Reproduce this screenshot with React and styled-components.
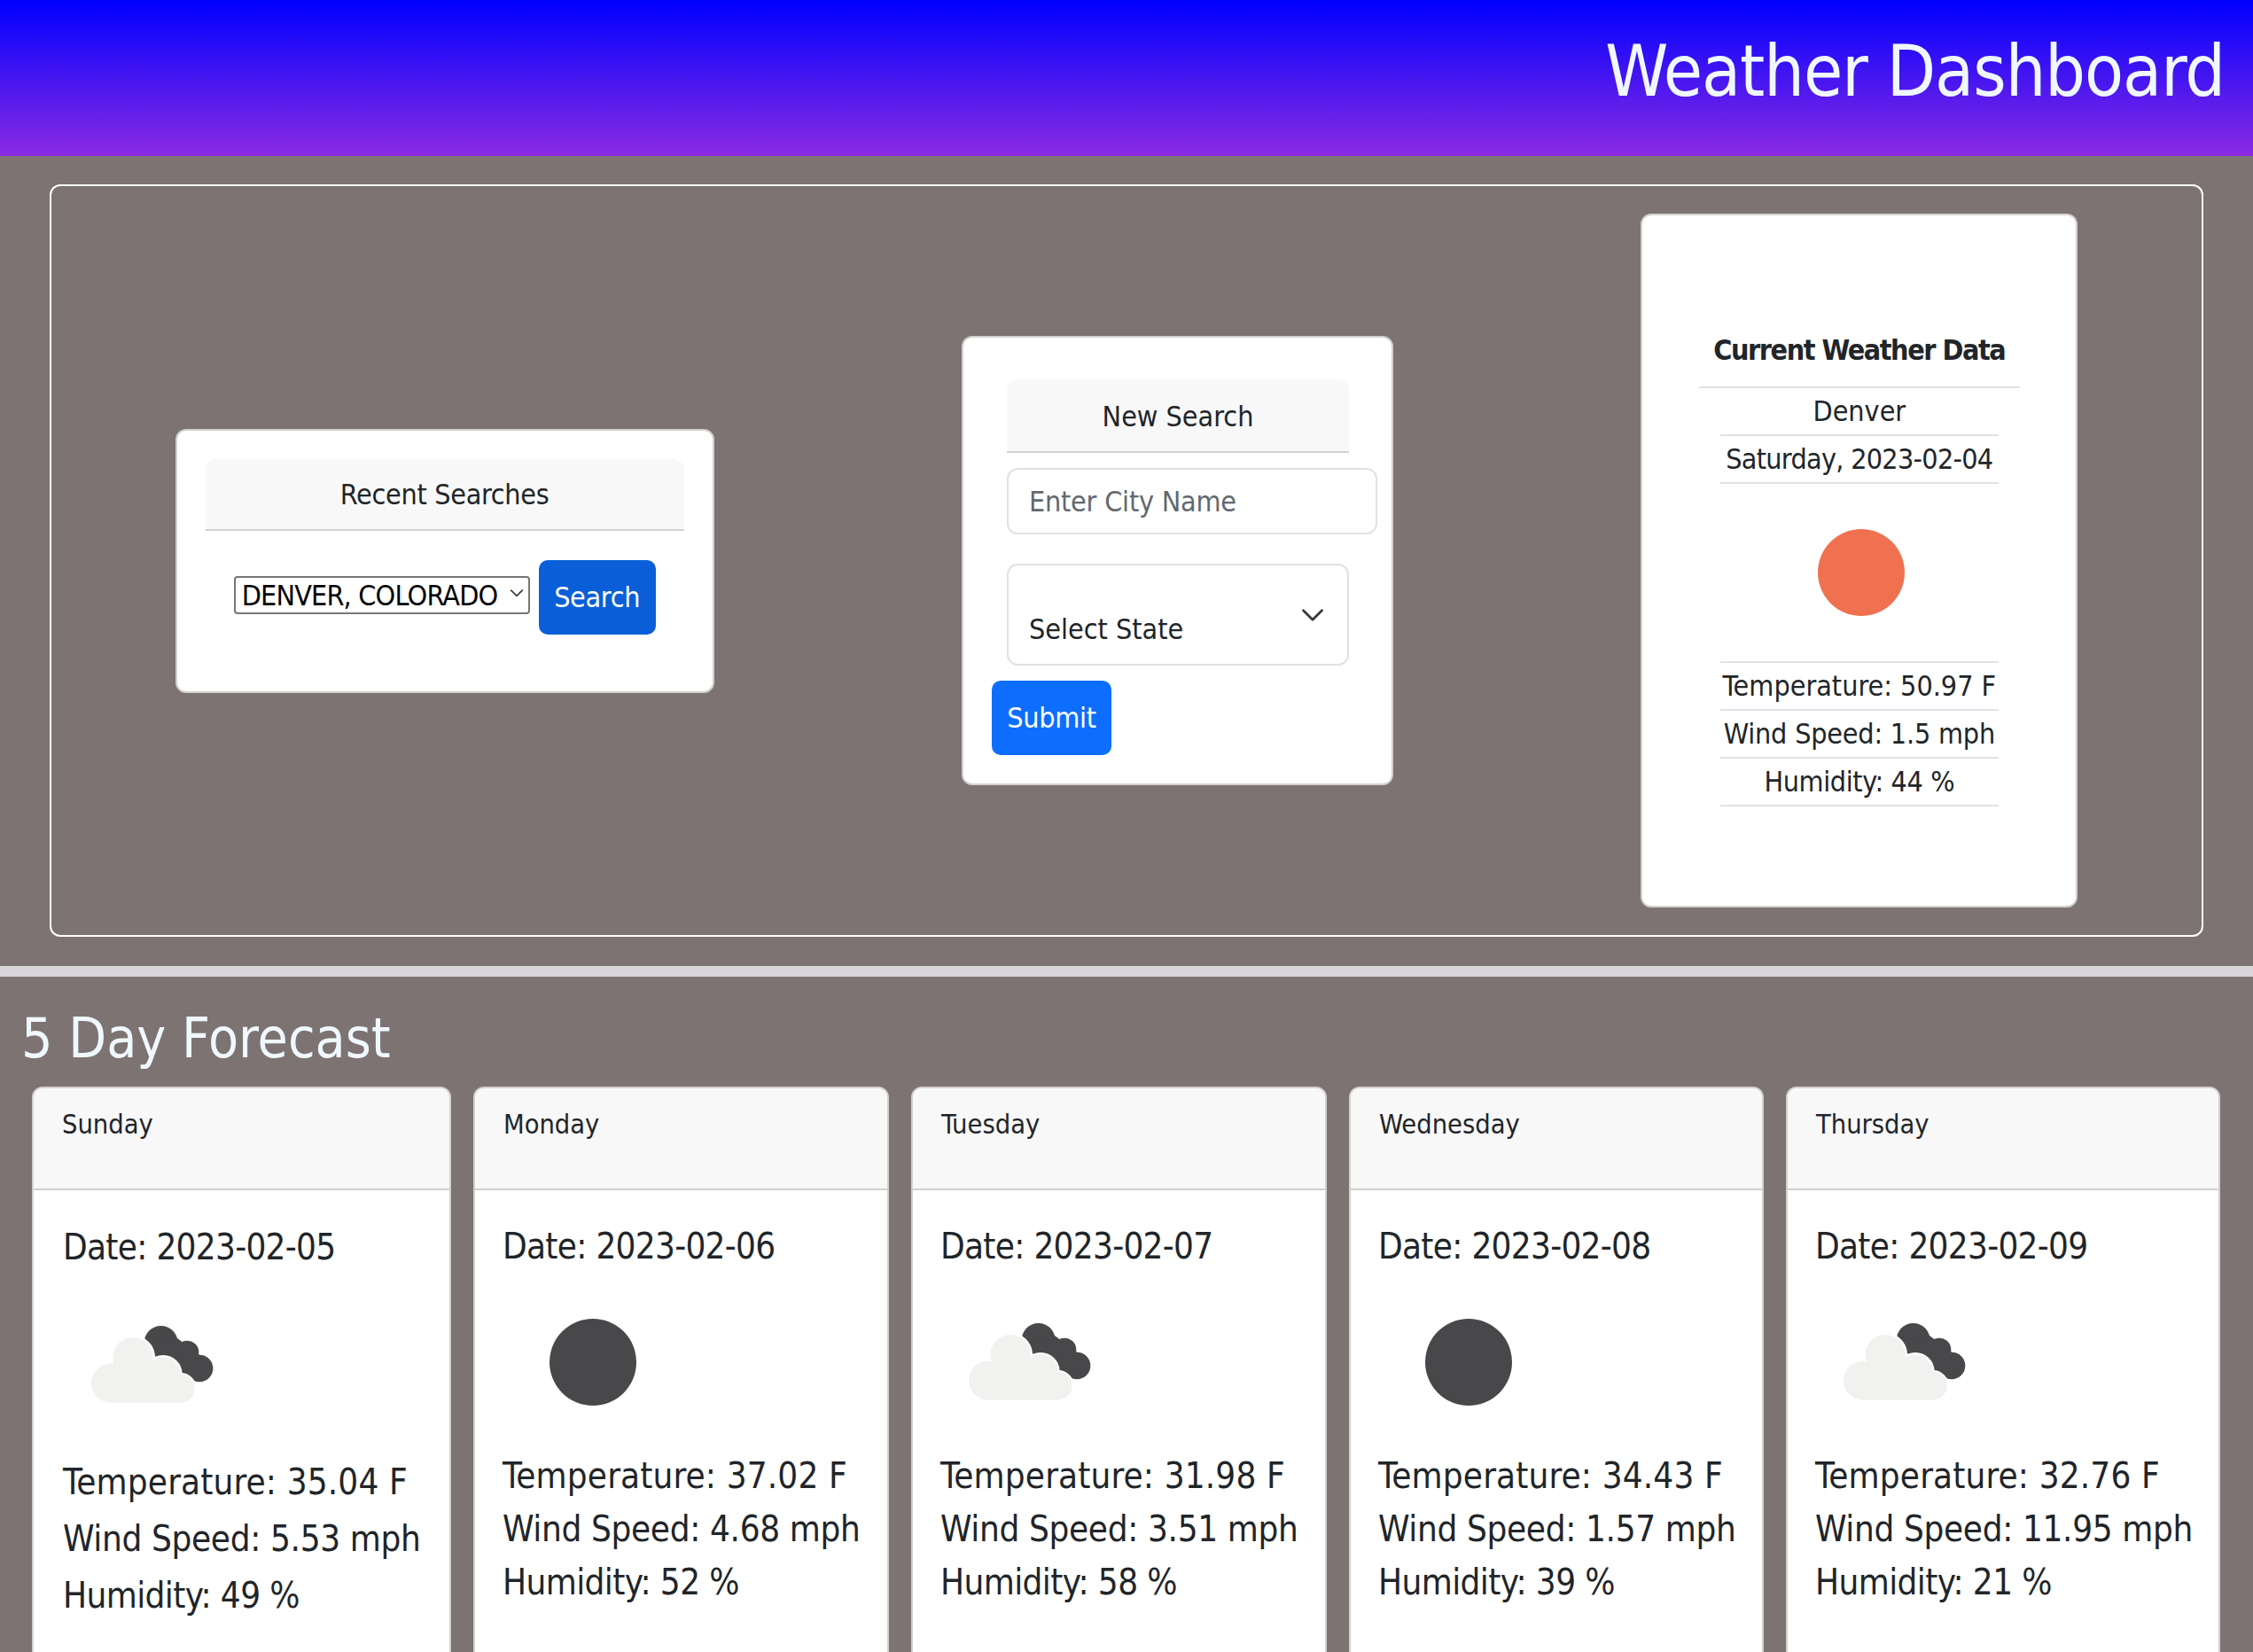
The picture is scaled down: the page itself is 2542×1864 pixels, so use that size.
import React from "react";
import styled, { createGlobalStyle } from "styled-components";

const Global = createGlobalStyle`
  html, body { margin: 0; padding: 0; height: 100%; overflow: hidden; }
  body {
    background: #7d7372;
    color: #212529;
    font-family: "DejaVu Sans", "Liberation Sans", sans-serif;
    font-stretch: condensed;
    font-size: 32px;
    line-height: 48px;
  }
  * { box-sizing: border-box; }
`;

const Header = styled.header`
  height: 176px;
  background: linear-gradient(#0000ff, #8a2be2);
  color: aliceblue;
  display: flex;
  justify-content: flex-end;
  align-items: center;
  padding: 0 32px 0 0;
`;
const Title = styled.h1`
  margin: 0;
  font-size: 80px;
  font-weight: 400;
  line-height: 96px;
  letter-spacing: -1px;
  position: relative;
  top: -7px;
`;
const Panel = styled.section`
  margin: 32px 56px 33px;
  height: 849px;
  border: 2px solid #fff;
  border-radius: 12px;
  display: flex;
  justify-content: space-around;
  align-items: center;
`;
const Card = styled.div`
  background: #fff;
  border: 2px solid #d3d0d0;
  border-radius: 12px;
`;
const RecentCard = styled(Card)`
  width: 608px;
  height: 298px;
  padding: 32px;
`;
const NewCard = styled(Card)`
  width: 487px;
  height: 507px;
  padding: 47px 48px 0 32px;
`;
const CurrentCard = styled(Card)`
  width: 493px;
  height: 783px;
  padding: 110px 63px 0;
  display: flex;
  flex-direction: column;
  align-items: center;
`;
const PanelHead = styled.div`
  background: #f8f8f8;
  border-bottom: 2px solid #d3d3d3;
  border-radius: 12px 12px 0 0;
  height: ${(p) => p.$h}px;
  line-height: ${(p) => p.$lh}px;
  letter-spacing: ${(p) => p.$ls || 0}px;
  text-align: center;
`;
const RecentForm = styled.form`
  display: flex;
  align-items: flex-start;
  gap: 10px;
  margin: 33px 0 0 32px;
`;
const NativeWrap = styled.div`
  position: relative;
  width: 334px;
  height: 43px;
  margin-top: 16px;
`;
const NativeSelect = styled.select`
  appearance: none;
  width: 100%;
  height: 100%;
  font: inherit;
  font-stretch: condensed;
  font-size: 32px;
  line-height: 36px;
  letter-spacing: -0.8px;
  color: #000;
  background: #fff;
  border: 2px solid #767676;
  border-radius: 4px;
  padding: 0 2px 0 7px;
`;
const NativeChevron = styled.svg`
  position: absolute;
  right: 6px;
  top: 12px;
  width: 18px;
  height: 18px;
  pointer-events: none;
`;
const Button = styled.button`
  height: 84px;
  padding: 0;
  width: ${(p) => p.$w}px;
  background: ${(p) => p.$bg};
  color: #fff;
  border: 0;
  border-radius: 10px;
  font: inherit;
  font-stretch: condensed;
  letter-spacing: -0.3px;
  line-height: 80px;
`;
const NewBody = styled.div`
  margin-left: 17px;
`;
const CityInput = styled.input`
  display: block;
  width: 418px;
  height: 75px;
  margin-top: 17px;
  padding: 0 23px;
  border: 2px solid #dee2e6;
  border-radius: 12px;
  font: inherit;
  font-stretch: condensed;
  letter-spacing: -0.2px;
  color: #212529;
  &::placeholder { color: #62686e; opacity: 1; }
`;
const StateWrap = styled.div`
  position: relative;
  width: 386px;
  height: 115px;
  margin: 33px 0 17px;
`;
const StateSelect = styled.select`
  appearance: none;
  width: 100%;
  height: 100%;
  padding: 32px 23px 0;
  border: 2px solid #dee2e6;
  border-radius: 12px;
  background: #fff;
  font: inherit;
  font-stretch: condensed;
  color: #212529;
`;
const Chevron = styled.svg`
  position: absolute;
  right: 27px;
  top: 44px;
  width: 28px;
  height: 28px;
  pointer-events: none;
`;
const CurrentTitle = styled.div`
  width: 362px;
  text-align: center;
  font-weight: 700;
  letter-spacing: -1.45px;
  line-height: 48px;
  padding-bottom: 17px;
  border-bottom: 2px solid #dee2e6;
  white-space: nowrap;
  margin: 18px 0 0;
`;
const List = styled.ul`
  list-style: none;
  margin: 0;
  padding: 0;
  width: 314px;
`;
const ListItem = styled.li`
  height: 54px;
  line-height: 52px;
  text-align: center;
  border-bottom: 2px solid #dee2e6;
  white-space: nowrap;
  letter-spacing: ${(p) => p.$ls || 0}px;
`;
const FirstItem = styled(ListItem)`
  border-top: 2px solid #dee2e6;
  height: 56px;
`;
const IconSlot = styled.div`
  height: 200px;
  display: flex;
  justify-content: center;
  align-items: center;
`;
const Divider = styled.div`
  height: 12px;
  background: #d9d6da;
`;
const ForecastTitle = styled.h2`
  margin: 34px 0 0 24px;
  font-size: 62px;
  font-weight: 400;
  line-height: 71px;
  color: aliceblue;
`;
const CardRow = styled.div`
  display: grid;
  grid-template-columns: 473px 469px 469px 468px 490px;
  gap: 25px;
  margin: 19px 0 0 36px;
`;
const DayCard = styled(Card)`
  height: 700px;
  overflow: hidden;
`;
const DayHead = styled.div`
  height: 115px;
  padding: 17px 32px 0;
  line-height: 48px;
  font-size: 30.5px;
  background: #f8f8f8;
  border-bottom: 2px solid #d0d0d0;
`;
const DayBody = styled.div`
  padding: ${(p) => p.$top}px 32px 0 ${(p) => p.$pad}px;
  font-size: 40px;
`;
const DayLine = styled.div`
  line-height: ${(p) => p.$lh}px;
  letter-spacing: ${(p) => p.$ls || 0}px;
  white-space: nowrap;
`;
const DayIcon = styled.div`
  height: 200px;
  width: 200px;
  margin: ${(p) => p.$mt}px 0 ${(p) => p.$mb}px;
`;

const Sun = ({ color }) => (
  <svg width="200" height="200" viewBox="0 0 200 200">
    <circle cx="102" cy="100" r="49" fill={color} />
  </svg>
);

const Clouds = () => (
  <svg width="200" height="200" viewBox="33 -60 600 600">
    <g fill="#48484a">
      <circle cx="365" cy="165" r="57" />
      <circle cx="453" cy="198" r="40" />
      <circle cx="495" cy="252" r="46" />
      <path d="M320 165 L420 150 L500 210 L480 295 L380 260 Z" />
    </g>
    <g fill="#fff" stroke="#fff" strokeWidth="14">
      <circle cx="270" cy="215" r="68" />
      <circle cx="372" cy="272" r="58" />
      <circle cx="432" cy="320" r="46" />
    </g>
    <g fill="#f1f1f0">
      <circle cx="270" cy="215" r="68" />
      <circle cx="195" cy="302" r="66" />
      <circle cx="372" cy="272" r="58" />
      <circle cx="432" cy="320" r="47" />
      <rect x="195" y="270" width="240" height="98" />
    </g>
  </svg>
);

const days = [
  { name: "Sunday", date: "2023-02-05", temp: "35.04", wind: "5.53", hum: "49", icon: "cloud", pad: 33, lh: 64, top: 40, mt: 9, mb: 0 },
  { name: "Monday", date: "2023-02-06", temp: "37.02", wind: "4.68", hum: "52", icon: "moon", pad: 31, lh: 60, top: 39, mt: 7, mb: -2 },
  { name: "Tuesday", date: "2023-02-07", temp: "31.98", wind: "3.51", hum: "58", icon: "cloud", pad: 31, lh: 60, top: 39, mt: 7, mb: -2 },
  { name: "Wednesday", date: "2023-02-08", temp: "34.43", wind: "1.57", hum: "39", icon: "moon", pad: 31, lh: 60, top: 39, mt: 7, mb: -2 },
  { name: "Thursday", date: "2023-02-09", temp: "32.76", wind: "11.95", hum: "21", icon: "cloud", pad: 31, lh: 60, top: 39, mt: 7, mb: -2 },
];

export default function App() {
  return (
    <>
      <Global />
      <Header>
        <Title>Weather Dashboard</Title>
      </Header>
      <Panel>
        <RecentCard>
          <PanelHead $h={81} $lh={81} $ls={-0.3}>Recent Searches</PanelHead>
          <RecentForm>
            <NativeWrap>
              <NativeSelect defaultValue="denver">
                <option value="denver">DENVER, COLORADO</option>
              </NativeSelect>
              <NativeChevron viewBox="0 0 16 16">
                <path d="M2 5l6 6 6-6" fill="none" stroke="#333" strokeWidth="1.4" />
              </NativeChevron>
            </NativeWrap>
            <Button type="button" $w={132} $bg="#0a5fd8">Search</Button>
          </RecentForm>
        </RecentCard>
        <NewCard>
          <NewBody>
            <PanelHead $h={83} $lh={84}>New Search</PanelHead>
            <CityInput placeholder="Enter City Name" />
            <StateWrap>
              <StateSelect defaultValue="">
                <option value="">Select State</option>
              </StateSelect>
              <Chevron viewBox="0 0 16 16">
                <path d="M2 5l6 6 6-6" fill="none" stroke="#343a40" strokeWidth="1.6" strokeLinecap="round" strokeLinejoin="round" />
              </Chevron>
            </StateWrap>
          </NewBody>
          <Button type="button" $w={135} $bg="#0d6efd">Submit</Button>
        </NewCard>
        <CurrentCard>
          <CurrentTitle>Current Weather Data</CurrentTitle>
          <List>
            <ListItem>Denver</ListItem>
            <ListItem $ls={-0.7}>Saturday, 2023-02-04</ListItem>
          </List>
          <IconSlot><Sun color="#ef7150" /></IconSlot>
          <List>
            <FirstItem>Temperature: 50.97 F</FirstItem>
            <ListItem $ls={-0.2}>Wind Speed: 1.5 mph</ListItem>
            <ListItem $ls={-0.4}>Humidity: 44 %</ListItem>
          </List>
        </CurrentCard>
      </Panel>
      <Divider />
      <ForecastTitle>5 Day Forecast</ForecastTitle>
      <CardRow>
        {days.map((d) => (
          <DayCard key={d.name}>
            <DayHead>{d.name}</DayHead>
            <DayBody $pad={d.pad} $top={d.top}>
              <DayLine $lh={48} $ls={-0.7}>Date: {d.date}</DayLine>
              <DayIcon $mt={d.mt} $mb={d.mb}>
                {d.icon === "cloud" ? <Clouds /> : <Sun color="#48484a" />}
              </DayIcon>
              <DayLine $lh={d.lh} $ls={0.15}>Temperature: {d.temp} F</DayLine>
              <DayLine $lh={d.lh} $ls={-0.35}>Wind Speed: {d.wind} mph</DayLine>
              <DayLine $lh={d.lh} $ls={-0.6}>Humidity: {d.hum} %</DayLine>
            </DayBody>
          </DayCard>
        ))}
      </CardRow>
    </>
  );
}
